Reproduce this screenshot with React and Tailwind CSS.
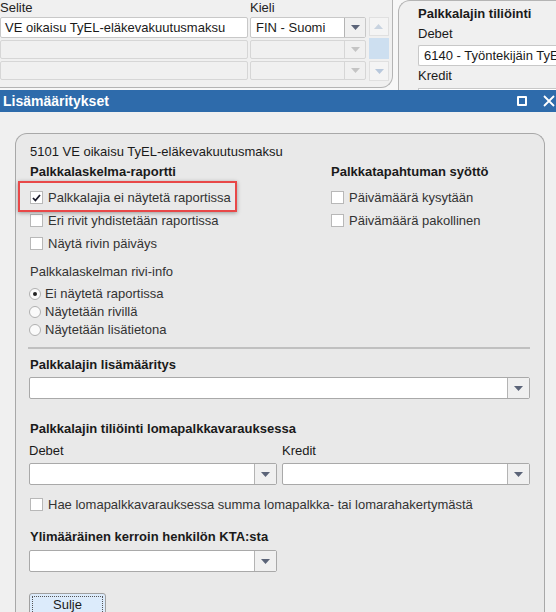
import React from "react";

const font = { fontFamily: '"Liberation Sans", Arial, sans-serif' };

function Arrow({ color = "#5b6478" }) {
  return (
    <svg width="9" height="5" viewBox="0 0 9 5">
      <path d="M0 0 L9 0 L4.5 5 Z" fill={color} />
    </svg>
  );
}

function Select({ className = "", value = "" }) {
  return (
    <div className={`flex h-[22px] bg-white border border-[#a9a9a9] rounded-[2px] ${className}`}>
      <div className="flex-1 px-[5px] flex items-center overflow-hidden whitespace-nowrap">{value}</div>
      <div className="w-[22px] border-l border-[#b4b4b4] bg-[#f0f0f0] flex items-center justify-center">
        <Arrow />
      </div>
    </div>
  );
}

function Checkbox({ checked, label }) {
  return (
    <div className="flex items-center h-[23px]">
      <div className="w-[13px] h-[13px] bg-white border border-[#b8b8b8] flex items-center justify-center">
        {checked && (
          <svg width="9" height="8" viewBox="0 0 9 8">
            <path d="M1 4 L3.4 6.5 L8 1" stroke="#1a1a2a" strokeWidth="1.8" fill="none" />
          </svg>
        )}
      </div>
      <span className="ml-[5px] text-[#333]">{label}</span>
    </div>
  );
}

function Radio({ checked, label }) {
  return (
    <div className="flex items-center h-[18px]">
      <div className="w-[12px] h-[12px] rounded-full bg-[#fafafa] border border-[#b0b0b0] flex items-center justify-center">
        {checked && <div className="w-[4px] h-[4px] rounded-full bg-[#222]" />}
      </div>
      <span className="ml-[4px] text-[#333]">{label}</span>
    </div>
  );
}

export default function App() {
  return (
    <div className="w-[556px] h-[612px] overflow-hidden bg-[#f0f0f0] text-[13px] text-[#1a1a1a]" style={font}>
      {/* BACKGROUND WINDOW */}
      <div className="flex h-[90px] overflow-hidden bg-[#f7f7f7]">
        <div className="w-[393px] h-[88px] bg-[#f0f0f0] border-r border-b border-[#b4b4b4] rounded-br-[12px] shrink-0">
          <div className="flex h-[14px] items-end leading-[12px] text-[#222]">
            <span className="w-[250px] -mt-[2px]">Selite</span>
            <span>Kieli</span>
          </div>
          <div className="flex mt-[3px]">
            <div className="flex flex-col gap-[2px]">
              <div className="flex gap-[2px]">
                <div className="w-[248px] h-[21px] bg-white border border-[#c8c8c8] rounded-[2px] flex items-center pl-[4px]">
                  VE oikaisu TyEL-eläkevakuutusmaksu
                </div>
                <div className="w-[116px] h-[21px] bg-white border border-[#c8c8c8] rounded-[2px] flex">
                  <div className="flex-1 flex items-center pl-[5px]">FIN - Suomi</div>
                  <div className="w-[21px] border-l border-[#b4b4b4] bg-[#f0f0f0] flex items-center justify-center">
                    <Arrow />
                  </div>
                </div>
              </div>
              {[0, 1].map((i) => (
                <div key={i} className="flex gap-[2px]">
                  <div className="w-[248px] h-[19px] bg-[#f0f0f0] border border-[#d6d6d6] rounded-[2px]" />
                  <div className="w-[116px] h-[19px] bg-[#f0f0f0] border border-[#d6d6d6] rounded-[2px] flex justify-end">
                    <div className="w-[21px] border-l border-[#d6d6d6] flex items-center justify-center">
                      <Arrow color="#c4c4c4" />
                    </div>
                  </div>
                </div>
              ))}
            </div>
            <div className="ml-[3px] w-[20px] flex flex-col gap-[2px]">
              <div className="h-[19px] border border-[#e0e0e0] bg-[#f4f4f4] flex items-center justify-center rotate-180">
                <Arrow color="#c8d3e0" />
              </div>
              <div className="h-[21px] bg-[#cddff0]" />
              <div className="h-[20px] border border-[#e0e0e0] bg-[#f4f4f4] flex items-center justify-center">
                <Arrow color="#b8c8dc" />
              </div>
            </div>
          </div>
        </div>
        <div className="ml-[5px] flex-1 bg-[#f0f0f0] border-l border-t border-[#b4b4b4] rounded-tl-[12px] pl-[19px] whitespace-nowrap">
          <div className="h-[18px] mt-[4px] flex items-center font-bold">Palkkalajin tiliöinti</div>
          <div className="h-[18px] mt-[2px] flex items-center">Debet</div>
          <div className="h-[21px] mt-[2px] bg-white border border-[#c8c8c8] rounded-l-[2px] border-r-0 flex items-center pl-[5px] overflow-hidden">
            6140 - Työntekijäin TyEL
          </div>
          <div className="h-[18px] mt-[1px] flex items-center">Kredit</div>
          <div className="h-[21px] mt-[3px] bg-white border border-[#c8c8c8] border-r-0" />
        </div>
      </div>

      {/* TITLE BAR */}
      <div className="h-[22px] bg-[#2e6bab] flex items-center text-white">
        <span className="pl-[3px] font-bold text-[14px]">Lisämääritykset</span>
        <div className="ml-auto flex items-center gap-[16px] pr-[1px]">
          <div className="w-[10px] h-[10px] border-2 border-white rounded-[1px]" />
          <svg width="12" height="12" viewBox="0 0 12 12">
            <path d="M1 1 L11 11 M11 1 L1 11" stroke="white" strokeWidth="1.8" />
          </svg>
        </div>
      </div>

      {/* DIALOG BODY */}
      <div className="pt-[21px] pl-[15px] pr-[11px]">
        <div className="relative h-[500px] bg-[#e9e9e9] border border-b-0 border-[#a8a8a8] rounded-t-[12px] pl-[14px] pr-[14px] pt-[9px]">
          <div className="h-[18px] flex items-center">5101 VE oikaisu TyEL-eläkevakuutusmaksu</div>

          <div className="grid grid-cols-[301px_1fr] mt-[2px]">
            <div>
              <div className="h-[18px] flex items-center font-bold">Palkkalaskelma-raportti</div>
              <div className="mt-[5px]">
                <Checkbox checked label="Palkkalajia ei näytetä raportissa" />
                <Checkbox label="Eri rivit yhdistetään raportissa" />
                <Checkbox label="Näytä rivin päiväys" />
              </div>
            </div>
            <div>
              <div className="h-[18px] flex items-center font-bold">Palkkatapahtuman syöttö</div>
              <div className="mt-[5px]">
                <Checkbox label="Päivämäärä kysytään" />
                <Checkbox label="Päivämäärä pakollinen" />
              </div>
            </div>
          </div>

          <div className="h-[18px] mt-[8px] flex items-center text-[#333]">Palkkalaskelman rivi-info</div>
          <div className="mt-[4px] -ml-[1px]">
            <Radio checked label="Ei näytetä raportissa" />
            <Radio label="Näytetään rivillä" />
            <Radio label="Näytetään lisätietona" />
          </div>

          <div className="h-[2px] bg-[#c0c0c0] mt-[8px] -ml-[2px]" />

          <div className="h-[18px] mt-[7px] flex items-center font-bold">Palkkalajin lisämääritys</div>
          <Select className="mt-[3px] -ml-[1px]" />

          <div className="h-[18px] mt-[21px] flex items-center font-bold">Palkkalajin tiliöinti lomapalkkavarauksessa</div>
          <div className="grid grid-cols-[248px_248px] gap-[5px] -ml-[1px]">
            <div>
              <div className="h-[18px] mt-[4px] flex items-center">Debet</div>
              <Select className="mt-[3px]" />
            </div>
            <div>
              <div className="h-[18px] mt-[4px] flex items-center">Kredit</div>
              <Select className="mt-[3px]" />
            </div>
          </div>

          <div className="mt-[8px]">
            <Checkbox label="Hae lomapalkkavarauksessa summa lomapalkka- tai lomarahakertymästä" />
          </div>

          <div className="h-[18px] mt-[12px] flex items-center font-bold">Ylimääräinen kerroin henkilön KTA:sta</div>
          <Select className="mt-[4px] -ml-[1px] w-[248px]" />

          <button className="mt-[21px] -ml-[1px] w-[77px] h-[24px] bg-[#dcebfb] border border-[#a0a0a0] rounded-[3px] p-[2px]">
            <div className="h-full border border-dotted border-[#555] flex items-center justify-center text-[#1a1a1a]">
              Sulje
            </div>
          </button>

          {/* highlight annotation */}
          <div className="absolute left-[2px] top-[47px] w-[219px] h-[31px] border-2 border-[#e84848] shadow-[0_1px_4px_rgba(0,0,0,0.35)]" />
        </div>
      </div>
    </div>
  );
}
